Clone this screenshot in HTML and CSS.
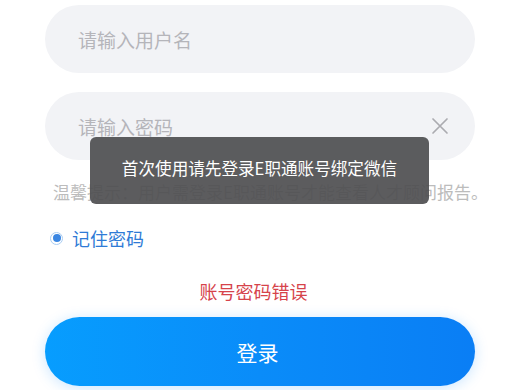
FILE: index.html
```html
<!DOCTYPE html>
<html lang="zh">
<head>
<meta charset="utf-8">
<link rel="stylesheet" href="styles.css">
</head>
<body>
<div class="page">
  <div class="field">
    <span class="placeholder">请输入用户名</span>
  </div>
  <div class="field field-pwd">
    <span class="placeholder">请输入密码</span>
    <svg class="clear" width="18" height="18" viewBox="0 0 18 18"><path d="M2 2 L16 16 M16 2 L2 16" stroke="#ababb0" stroke-width="1.7" stroke-linecap="round" fill="none"/></svg>
  </div>
  <p class="tip">温馨提示：用户需登录E职通账号才能查看人才顾问报告。</p>
  <label class="remember">
    <span class="radio"><span class="dot"></span></span>
    <span class="remember-text">记住密码</span>
  </label>
  <p class="error">账号密码错误</p>
  <button class="login">登录</button>
  <div class="toast">首次使用请先登录E职通账号绑定微信</div>
</div>
</body>
</html>
```
FILE: styles.css
```css
html, body {
  margin: 0;
  padding: 0;
  background: #ffffff;
}
body {
  font-family: "Noto Sans CJK SC", "Noto Sans", sans-serif;
  width: 520px;
  height: 390px;
  overflow: hidden;
}
.page {
  position: relative;
  padding: 5px 45px 0 45px;
  display: flex;
  flex-direction: column;
}
.field {
  height: 68px;
  border-radius: 34px;
  background: #f2f3f6;
  display: flex;
  align-items: center;
  padding: 0 26px 0 33px;
}
.field-pwd {
  margin-top: 19px;
}
.placeholder {
  flex: 1;
  font-size: 19px;
  color: #b5b5ba;
}
.clear {
  display: block;
}
.tip {
  margin: 20px 0 0 8px;
  font-size: 17px;
  line-height: 24px;
  color: #bcbcbc;
  white-space: nowrap;
}
.remember {
  display: flex;
  align-items: center;
  margin: 22px 0 0 5px;
  height: 24px;
}
.radio {
  width: 11px;
  height: 11px;
  border: 1.5px solid #a9cdf3;
  border-radius: 50%;
  display: flex;
  align-items: center;
  justify-content: center;
  margin-right: 9px;
}
.dot {
  width: 8px;
  height: 8px;
  border-radius: 50%;
  background: #3a86e2;
}
.remember-text {
  font-size: 18px;
  color: #2f7bd6;
}
.error {
  margin: 29px 0 0 0;
  text-align: center;
  font-size: 18px;
  line-height: 24px;
  color: #d6434b;
  padding-right: 13px;
}
.login {
  margin-top: 14px;
  height: 69px;
  border: none;
  border-radius: 35px;
  background: linear-gradient(90deg, #079dfe 0%, #0a8cf9 50%, #0a7ef5 100%);
  box-shadow: 0 2px 14px rgba(20, 140, 255, 0.22);
  color: #ffffff;
  font-family: "Noto Sans CJK SC", sans-serif;
  font-size: 21px;
  padding: 0 5px 0 0;
}
.toast {
  position: absolute;
  left: 90px;
  top: 137px;
  width: 339px;
  height: 67px;
  box-sizing: border-box;
  padding-top: 19px;
  border-radius: 6px;
  background: rgba(80, 80, 82, 0.93);
  color: #ffffff;
  font-size: 16.6px;
  line-height: 24px;
  text-align: center;
}
```
